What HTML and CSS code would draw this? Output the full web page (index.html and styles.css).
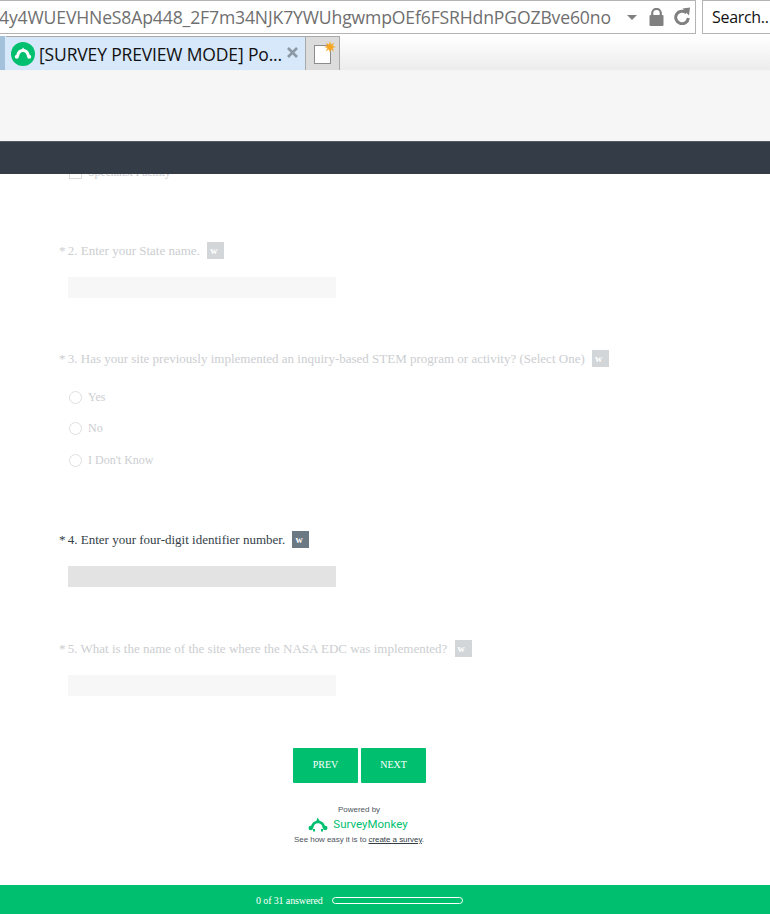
FILE: index.html
```html
<!DOCTYPE html>
<html lang="en">
<head>
<meta charset="utf-8">
<title>Survey preview</title>
<link rel="stylesheet" href="styles.css">
</head>
<body>
<div class="page">
  <div class="toolbar">
    <div class="address">
      <span class="url">4y4WUEVHNeS8Ap448_2F7m34NJK7YWUhgwmpOEf6FSRHdnPGOZBve60no</span>
      <span class="caret"></span>
      <svg class="lock" width="15" height="18" viewBox="0 0 15 18"><path d="M3.200 8V5.200a4.300 4.300 0 0 1 8.600 0V8" fill="none" stroke="#808080" stroke-width="2.200"/><rect x="0.500" y="7" width="14" height="11" rx="1" fill="#808080"/></svg>
      <svg class="reload" width="18" height="18" viewBox="0 0 18 18"><path d="M13.500 6A6.300 6.300 0 1 0 15.300 11" fill="none" stroke="#808080" stroke-width="3"/><path d="M9.500 1.500 L17 0.500 L16 8.500 Z" fill="#808080"/></svg>
    </div>
    <div class="search">Search..</div>
  </div>
  <div class="tabs">
    <div class="tab-edge"></div>
    <div class="tab">
      <svg class="favicon" width="24" height="24" viewBox="0 0 24 24"><circle cx="12" cy="12" r="12" fill="#00bf6f"/><path d="M6.500 14.500C7 10.500 9 8.500 12 8.500s5 2 5.500 6" fill="none" stroke="#fff" stroke-width="3"/><circle cx="5.800" cy="14.800" r="2" fill="#fff"/><circle cx="18.200" cy="14.800" r="2" fill="#fff"/><path d="M10.500 8 L12 5.500 L14 8 Z" fill="#fff"/></svg>
      <span class="tab-title">[SURVEY PREVIEW MODE] Po...</span>
      <svg class="tab-close" width="11" height="11" viewBox="0 0 11 11"><path d="M1 1L10 10M10 1L1 10" stroke="#8b97a3" stroke-width="2.600"/></svg>
    </div>
    <div class="new-tab">
      <span class="new-page"></span>
      <svg class="new-star" width="12" height="12" viewBox="0 0 12 12"><path d="M6 0l1 3.500L10.200 1.800 8.500 5 12 6 8.500 7l1.700 3.200L7 8.500 6 12 5 8.500 1.800 10.200 3.500 7 0 6l3.500-1L1.800 1.800 5 3.500z" fill="#f5a623"/></svg>
    </div>
    <div class="tabs-fill"></div>
  </div>
  <div class="site-header"></div>
  <div class="site-bar"></div>
  <main class="content">
    <div class="clipped-option"><span class="checkbox"></span><span class="option-text tight">Specialist Facility</span></div>

    <section class="question q2 muted">
      <div class="q-title"><span class="star">*</span> 2. Enter your State name. <span class="badge">w</span></div>
      <div class="field"></div>
    </section>

    <section class="question q3 muted">
      <div class="q-title"><span class="star">*</span> 3. Has your site previously implemented an inquiry-based STEM program or activity? (Select One) <span class="badge">w</span></div>
      <div class="options">
        <div class="option"><span class="radio"></span><span class="option-text">Yes</span></div>
        <div class="option"><span class="radio"></span><span class="option-text">No</span></div>
        <div class="option"><span class="radio"></span><span class="option-text">I Don't Know</span></div>
      </div>
    </section>

    <section class="question q4">
      <div class="q-title"><span class="star">*</span> 4. Enter your four-digit identifier number. <span class="badge">w</span></div>
      <div class="field"></div>
    </section>

    <section class="question q5 muted">
      <div class="q-title"><span class="star">*</span> 5. What is the name of the site where the NASA EDC was implemented? <span class="badge">w</span></div>
      <div class="field"></div>
    </section>

    <div class="nav-buttons">
      <button class="btn">PREV</button>
      <button class="btn">NEXT</button>
    </div>

    <div class="powered">
      <div class="powered-by">Powered by</div>
      <div class="brand">
        <svg class="brand-icon" width="20" height="15" viewBox="0 0 20 15"><path d="M4 11C4.500 7 6.800 5 10 5s5.500 2 6 6" fill="none" stroke="#00bf6f" stroke-width="2.600"/><circle cx="2.800" cy="11" r="2.300" fill="#00bf6f"/><circle cx="17.200" cy="11" r="2.300" fill="#00bf6f"/><path d="M8 5 L9.500 0.500 L12.500 5 Z" fill="#00bf6f"/><rect x="5" y="12" width="2" height="2.500" fill="#00bf6f"/><rect x="13" y="12" width="2" height="2.500" fill="#00bf6f"/></svg>
        <span class="brand-name">SurveyMonkey</span>
      </div>
      <div class="see-how">See how easy it is to <a class="see-link">create a survey</a>.</div>
    </div>
  </main>
  <footer class="progress-bar">
    <span class="progress-text">0 of 31 answered</span>
    <span class="progress-track"></span>
  </footer>
</div>
</body>
</html>
```
FILE: styles.css
```css
* { box-sizing: border-box; }
html, body { margin: 0; padding: 0; }
body { background: #fff; }
.page { width: 770px; height: 914px; display: flex; flex-direction: column; overflow: hidden; }

.toolbar { height: 36px; flex: none; display: flex; gap: 6px; background: #fff; }
.address { width: 696px; height: 34px; flex: none; border: 1px solid #b4b4b4; border-left: 0; display: flex; align-items: center; overflow: hidden; }
.url { font: 17.6px "Open Sans", "Noto Sans", sans-serif; color: #6f6f6f; white-space: nowrap; width: 627px; margin-left: -1px; flex: none; overflow: hidden; letter-spacing: -0.15px; }
.caret { width: 0; height: 0; border-left: 5px solid transparent; border-right: 5px solid transparent; border-top: 5px solid #808080; margin-left: 1px; flex: none; }
.lock { margin-left: 12px; flex: none; margin-top: -1px; }
.reload { margin-left: 9px; flex: none; margin-top: -3px; }
.search { flex: 1; height: 34px; border: 1px solid #b4b4b4; border-right: 0; font: 16px "Open Sans", "Noto Sans", sans-serif; letter-spacing: -0.3px; color: #111; padding: 5px 0 0 9px; white-space: nowrap; }

.tabs { height: 35px; flex: none; display: flex; background: linear-gradient(#fff, #ececec); border-bottom: 1px solid #f4f4f4; }
.tab-edge { width: 6px; background: #a3c1da; border-right: 1px solid #d6e8f9; }
.tab { width: 300px; display: flex; align-items: center; background: #d6e8f9; border-top: 1px solid #a9a9a9; border-right: 1px solid #a9a9a9; padding-left: 5px; }
.favicon { flex: none; }
.tab-title { font: 17.5px "Open Sans", "Noto Sans", sans-serif; color: #111; margin: 1px 0 0 4px; white-space: nowrap; letter-spacing: -0.15px; }
.tab-close { flex: none; margin: -3px 0 0 5px; }
.new-tab { width: 34px; background: #dcdcdc; border-top: 1px solid #a9a9a9; border-right: 1px solid #a9a9a9; position: relative; }
.new-page { display: block; width: 17px; height: 19px; background: #fff; border: 1px solid #8c8c8c; margin: 8px 0 0 8px; }
.new-star { position: absolute; top: 4px; left: 18px; }
.tabs-fill { flex: 1; }

.site-header { height: 70px; flex: none; background: #f6f6f6; }
.site-bar { height: 33px; flex: none; background: #343d47; border-top: 1px solid #555c64; }

.content { flex: 1; min-height: 0; overflow: hidden; font-family: "Liberation Serif", "Times New Roman", serif; }
.clipped-option { display: flex; align-items: center; height: 16px; margin: -10px 0 0 69px; color: #cdcfd2; font-size: 12px; }
.checkbox { width: 13px; height: 13px; border: 1px solid #dcdcdc; margin-right: 6px; }
.tight { letter-spacing: -0.2px; }

.question { padding-left: 59px; }
.q2 { margin-top: 61px; }
.q3 { margin-top: 51px; }
.q4 { margin-top: 61px; }
.q5 { margin-top: 52px; }
.q-title { font-size: 13px; line-height: 20px; height: 18px; color: #333e48; display: flex; align-items: flex-start; white-space: pre; }
.star { font-size: 13px; margin-right: -1px; }
.badge { width: 17px; height: 17px; background: #6b7985; color: #fff; font: bold 10px/17px "Liberation Serif", serif; padding-left: 3px; margin: 1px 0 0 4px; flex: none; }
.field { width: 268px; height: 21px; margin: 18px 0 0 9px; background: #e3e3e3; }
.muted .q-title { color: #ccced1; }
.muted .badge { background: #d3d6d9; }
.muted .field { background: #f7f7f7; }

.options { margin: 21px 0 0 10px; display: flex; flex-direction: column; gap: 13.5px; }
.option { display: flex; align-items: center; height: 18px; }
.radio { width: 13px; height: 13px; border: 1px solid #dfdfdf; border-radius: 50%; margin-right: 6px; flex: none; }
.option-text { font-size: 12px; color: #ccced1; }

.nav-buttons { display: flex; gap: 3px; margin: 52px 0 0 293px; }
.btn { width: 65px; height: 35px; background: #00bf6f; color: #fff; border: 0; border-radius: 1px; padding: 0 0 2px; font: 10px "Liberation Serif", serif; }

.powered { margin: 22px 0 0 0; width: 718px; display: flex; flex-direction: column; align-items: center; font: 8px "Liberation Sans", Arial, sans-serif; color: #4d555e; }
.powered-by { line-height: 9px; }
.brand { display: flex; align-items: center; height: 16px; margin: 2px 0 0 -2px; }
.brand-icon { flex: none; }
.brand-name { font: 11.5px Roboto, sans-serif; color: #00bf6f; margin-left: 5px; }
.see-how { line-height: 10px; margin-top: 3px; letter-spacing: -0.05px; }
.see-link { text-decoration: underline; color: #333e48; }

.progress-bar { height: 29px; flex: none; background: #00bf6f; display: flex; align-items: center; padding: 1px 0 0 256px; gap: 9px; }
.progress-text { font: 10px "Liberation Serif", serif; color: #fff; letter-spacing: -0.12px; }
.progress-track { width: 131px; height: 7px; border: 1px solid #fff; border-radius: 4px; }
```
